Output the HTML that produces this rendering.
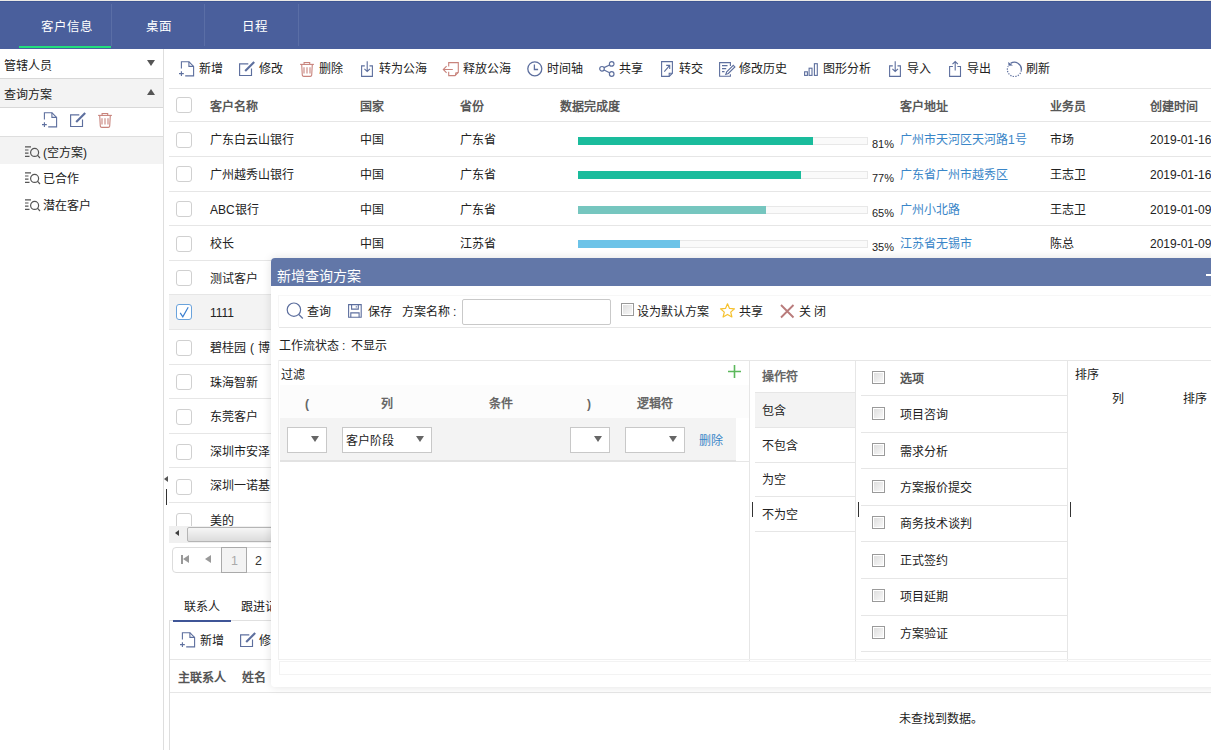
<!DOCTYPE html>
<html lang="zh-CN">
<head>
<meta charset="utf-8">
<style>
html,body{margin:0;padding:0;}
body{width:1211px;height:750px;overflow:hidden;position:relative;background:#fff;font-family:"Liberation Sans",sans-serif;font-size:12px;color:#222;}
.a{position:absolute;}
.t{position:absolute;white-space:nowrap;line-height:16px;height:16px;}
svg{position:absolute;overflow:visible;}
.cb{position:absolute;box-sizing:border-box;width:16px;height:16px;border:1px solid #d0d0d0;border-radius:3px;background:#fff;}
.sq{position:absolute;box-sizing:border-box;width:13px;height:13px;border:1px solid #9a9a9a;background:linear-gradient(135deg,#dcdcdc,#fafafa);box-shadow:inset 0 0 0 1px #fff;}
.sel{position:absolute;box-sizing:border-box;height:26px;border:1px solid #c8c8c8;background:#fff;}
.tri{position:absolute;width:0;height:0;border-left:5px solid transparent;border-right:5px solid transparent;border-top:7px solid #666;}
</style>
</head>
<body>
<div class="a" style="left:0px;top:0px;width:1211px;height:1px;background:#ebe9e6;"></div>
<div class="a" style="left:0px;top:1px;width:1211px;height:48px;background:#4a5f9c;"></div>
<div class="a" style="left:0px;top:1px;width:1211px;height:1px;background:#3e5592;"></div>
<div class="t" style="left:41px;top:18.5px;font-size:12.5px;color:#fff;">客户信息</div>
<div class="t" style="left:146px;top:18.5px;font-size:12.5px;color:#fff;">桌面</div>
<div class="t" style="left:242px;top:18.5px;font-size:12.5px;color:#fff;">日程</div>
<div class="a" style="left:111px;top:4px;width:1px;height:42px;background:#5a6ea6;"></div>
<div class="a" style="left:204px;top:4px;width:1px;height:42px;background:#5a6ea6;"></div>
<div class="a" style="left:298px;top:4px;width:1px;height:42px;background:#5a6ea6;"></div>
<div class="a" style="left:19px;top:46px;width:92px;height:2px;background:#22e07d;"></div>
<div class="a" style="left:163px;top:49px;width:1px;height:701px;background:#dedede;"></div>
<div class="t" style="left:4px;top:57.7px;font-size:12px;color:#222;">管辖人员</div>
<div class="tri" style="left:147px;top:60px;border-left-width:4px;border-right-width:4px;border-top:6px solid #555"></div>
<div class="a" style="left:0px;top:78px;width:163px;height:1px;background:#d8d8d8;"></div>
<div class="a" style="left:0px;top:79px;width:163px;height:28px;background:#f3f3f3;"></div>
<div class="t" style="left:4px;top:86.5px;font-size:12px;color:#222;">查询方案</div>
<div class="tri" style="left:147px;top:89px;border-left-width:4px;border-right-width:4px;border-top:0;border-bottom:6px solid #555"></div>
<div class="a" style="left:0px;top:107px;width:163px;height:1px;background:#d8d8d8;"></div>
<svg style="left:42px;top:112px;" width="16" height="16" viewBox="0 0 16 16"><g fill="none" stroke="#5d6f9e" stroke-width="1.1"><path d="M2.4 7.4V0.8h7.6l4.6 4.6v9.5H6.2"/><path d="M9.9 0.8v4.6h4.7"/><path d="M0 12.6h4.8M2.4 10.2v4.8"/></g></svg>
<svg style="left:70px;top:112px;" width="17" height="16" viewBox="0 0 17 16"><g fill="none" stroke="#5d6f9e" stroke-width="1.15"><path d="M9.3 2.9H0.6v11.6h11.9V7.6"/></g><path d="M6.2 9.9L15.2 0.9" stroke="#5d6f9e" stroke-width="2.1"/></svg>
<svg style="left:98px;top:112px;" width="15" height="16" viewBox="0 0 15 16"><g fill="none" stroke="#c8837c" stroke-width="1.1"><path d="M0.1 3.4h13.8"/><path d="M4.1 3.4V1.5h5.6v1.9"/><path d="M1.7 3.4l0.6 10.8q0.2 1.2 1.4 1.2h6.6q1.2 0 1.4-1.2l0.6-10.8"/><path d="M4 6.2v6.3M7 6.2v6.3M10 6.2v6.3"/></g></svg>
<div class="a" style="left:0px;top:136px;width:163px;height:1px;background:#dedede;"></div>
<div class="a" style="left:0px;top:137px;width:163px;height:27px;background:#f3f3f3;"></div>
<svg style="left:25px;top:145.7px;" width="16" height="12" viewBox="0 0 16 12"><g fill="none" stroke="#555" stroke-width="1.2"><path d="M0 0.8h6M0 4h3.5M0 7.2h3.5M0 10.4h4.5"/><circle cx="9.6" cy="6.4" r="4"/><path d="M12.4 9.2l2.6 2.8"/></g></svg>
<div class="t" style="left:43px;top:144.7px;font-size:12px;color:#222;">(空方案)</div>
<svg style="left:25px;top:172.3px;" width="16" height="12" viewBox="0 0 16 12"><g fill="none" stroke="#555" stroke-width="1.2"><path d="M0 0.8h6M0 4h3.5M0 7.2h3.5M0 10.4h4.5"/><circle cx="9.6" cy="6.4" r="4"/><path d="M12.4 9.2l2.6 2.8"/></g></svg>
<div class="t" style="left:43px;top:171.3px;font-size:12px;color:#222;">已合作</div>
<svg style="left:25px;top:199px;" width="16" height="12" viewBox="0 0 16 12"><g fill="none" stroke="#555" stroke-width="1.2"><path d="M0 0.8h6M0 4h3.5M0 7.2h3.5M0 10.4h4.5"/><circle cx="9.6" cy="6.4" r="4"/><path d="M12.4 9.2l2.6 2.8"/></g></svg>
<div class="t" style="left:43px;top:198px;font-size:12px;color:#222;">潜在客户</div>
<div class="a" style="left:169px;top:88px;width:1042px;height:1px;background:#e6e6e6;"></div>
<svg style="left:179px;top:61px;" width="16" height="16" viewBox="0 0 16 16"><g fill="none" stroke="#5d6f9e" stroke-width="1.1"><path d="M2.4 7.4V0.8h7.6l4.6 4.6v9.5H6.2"/><path d="M9.9 0.8v4.6h4.7"/><path d="M0 12.6h4.8M2.4 10.2v4.8"/></g></svg>
<div class="t" style="left:199px;top:61px;font-size:12px;color:#222;">新增</div>
<svg style="left:239px;top:61px;" width="17" height="16" viewBox="0 0 17 16"><g fill="none" stroke="#5d6f9e" stroke-width="1.15"><path d="M9.3 2.9H0.6v11.6h11.9V7.6"/></g><path d="M6.2 9.9L15.2 0.9" stroke="#5d6f9e" stroke-width="2.1"/></svg>
<div class="t" style="left:259px;top:61px;font-size:12px;color:#222;">修改</div>
<svg style="left:300px;top:61px;" width="15" height="16" viewBox="0 0 15 16"><g fill="none" stroke="#c8837c" stroke-width="1.1"><path d="M0.1 3.4h13.8"/><path d="M4.1 3.4V1.5h5.6v1.9"/><path d="M1.7 3.4l0.6 10.8q0.2 1.2 1.4 1.2h6.6q1.2 0 1.4-1.2l0.6-10.8"/><path d="M4 6.2v6.3M7 6.2v6.3M10 6.2v6.3"/></g></svg>
<div class="t" style="left:319px;top:61px;font-size:12px;color:#222;">删除</div>
<svg style="left:361px;top:61px;" width="13" height="16" viewBox="0 0 13 16"><g fill="none" stroke="#5d6f9e" stroke-width="1.1"><path d="M3.8 4.9H0.6v10.5h10.8V4.9H8.5"/><path d="M6.2 0.2v10.2M3.4 7.8l2.8 2.7 2.8-2.7"/></g></svg>
<div class="t" style="left:379px;top:61px;font-size:12px;color:#222;">转为公海</div>
<svg style="left:443px;top:61px;" width="16" height="16" viewBox="0 0 16 16"><g fill="none" stroke="#c8837c" stroke-width="1.1"><path d="M5.7 5.6V1.6h9.6v9.7l-3.3 3.3H5.7v-3.8"/><path d="M0.3 8.5h9.5M3.6 5.2L0.3 8.5l3.3 3.3"/><path d="M12.5 14.4l0.3-2.5 2.4-0.3"/></g></svg>
<div class="t" style="left:463px;top:61px;font-size:12px;color:#222;">释放公海</div>
<svg style="left:527px;top:61px;" width="16" height="16" viewBox="0 0 16 16"><g fill="none" stroke="#5d6f9e" stroke-width="1.3"><circle cx="7.8" cy="7.8" r="7"/><path d="M7.4 3.4v5.1h3.7"/></g></svg>
<div class="t" style="left:547px;top:61px;font-size:12px;color:#222;">时间轴</div>
<svg style="left:599px;top:61px;" width="16" height="16" viewBox="0 0 16 16"><g fill="none" stroke="#5d6f9e" stroke-width="1.2"><circle cx="3" cy="7.8" r="2.3"/><circle cx="12.7" cy="2.9" r="2.3"/><circle cx="12.7" cy="13" r="2.3"/><path d="M5 6.6l5.6-2.6M5 9l5.6 2.8"/></g></svg>
<div class="t" style="left:619px;top:61px;font-size:12px;color:#222;">共享</div>
<svg style="left:661px;top:61px;" width="13" height="16" viewBox="0 0 13 16"><g fill="none" stroke="#5d6f9e" stroke-width="1.1"><path d="M0.6 0.6h10.8v11.6l-3.2 3.2H0.6z"/><path d="M8.2 15.4v-3.2h3.2"/><path d="M3.3 10.6L8.5 4.6M5.2 4.4h3.5v3.5"/></g></svg>
<div class="t" style="left:679px;top:61px;font-size:12px;color:#222;">转交</div>
<svg style="left:719px;top:62px;" width="17" height="15" viewBox="0 0 17 15"><g fill="none" stroke="#5d6f9e" stroke-width="1.1"><path d="M11.4 4V0.6H0.6v13.6h10.8v-2"/><path d="M3 3.6h5.5M3 6.6h4.2M3 9.6h2.5"/><path d="M14.3 3.3l1.6 1.6-6.6 6.6-2.5 0.9 0.9-2.5z"/></g></svg>
<div class="t" style="left:739px;top:61px;font-size:12px;color:#222;">修改历史</div>
<svg style="left:804px;top:61px;" width="15" height="16" viewBox="0 0 15 16"><g fill="none" stroke="#5d6f9e" stroke-width="1.1"><rect x="0.6" y="10.8" width="2.8" height="3.6"/><rect x="5.1" y="7.2" width="2.9" height="7.2"/><rect x="10.4" y="2.7" width="2.9" height="11.7"/></g></svg>
<div class="t" style="left:823px;top:61px;font-size:12px;color:#222;">图形分析</div>
<svg style="left:889px;top:61px;" width="13" height="16" viewBox="0 0 13 16"><g fill="none" stroke="#5d6f9e" stroke-width="1.1"><path d="M3.8 4.9H0.6v10.5h10.8V4.9H8.5"/><path d="M6.2 0.2v10.2M3.4 7.8l2.8 2.7 2.8-2.7"/></g></svg>
<div class="t" style="left:907px;top:61px;font-size:12px;color:#222;">导入</div>
<svg style="left:949px;top:61px;" width="13" height="16" viewBox="0 0 13 16"><g fill="none" stroke="#5d6f9e" stroke-width="1.1"><path d="M3.9 5.5H0.6v9.9h10.9V5.5H8.4"/><path d="M6.2 9.6V0.6M3.5 3.2l2.7-2.7 2.7 2.7"/></g></svg>
<div class="t" style="left:967px;top:61px;font-size:12px;color:#222;">导出</div>
<svg style="left:1007px;top:61px;" width="16" height="16" viewBox="0 0 16 16"><g fill="none" stroke="#5d6f9e" stroke-width="1.3"><path d="M3.6 2.4A7 7 0 0 1 14.3 9.4"/><path d="M14.3 9.4A7 7 0 1 1 1.2 5.2" stroke-dasharray="1.3 1.3" stroke-width="1.2"/></g><path d="M1.2 0.9L6 4.5L1.5 4.7z" fill="#5d6f9e"/></svg>
<div class="t" style="left:1026px;top:61px;font-size:12px;color:#222;">刷新</div>
<div class="cb" style="left:176px;top:97px"></div>
<div class="t" style="left:210px;top:98.5px;font-size:12px;color:#585858;font-weight:bold;">客户名称</div>
<div class="t" style="left:360px;top:98.5px;font-size:12px;color:#585858;font-weight:bold;">国家</div>
<div class="t" style="left:460px;top:98.5px;font-size:12px;color:#585858;font-weight:bold;">省份</div>
<div class="t" style="left:560px;top:98.5px;font-size:12px;color:#585858;font-weight:bold;">数据完成度</div>
<div class="t" style="left:900px;top:98.5px;font-size:12px;color:#585858;font-weight:bold;">客户地址</div>
<div class="t" style="left:1050px;top:98.5px;font-size:12px;color:#585858;font-weight:bold;">业务员</div>
<div class="t" style="left:1150px;top:98.5px;font-size:12px;color:#585858;font-weight:bold;">创建时间</div>
<div class="a" style="left:169px;top:121px;width:1042px;height:1px;background:#e6e6e6;"></div>
<div class="cb" style="left:176px;top:132px"></div>
<div class="t" style="left:210px;top:132.2px;font-size:12px;color:#222;">广东白云山银行</div>
<div class="t" style="left:360px;top:132.2px;font-size:12px;color:#222;">中国</div>
<div class="t" style="left:460px;top:132.2px;font-size:12px;color:#222;">广东省</div>
<div class="a" style="left:578px;top:137px;width:290px;height:8px;background:#fafafa;box-sizing:border-box;border:1px solid #e8e8e8"></div>
<div class="a" style="left:578px;top:137px;width:235px;height:8px;background:#1abc9c;"></div>
<div class="t" style="left:872px;top:136.2px;font-size:11px;color:#222;">81%</div>
<div class="t" style="left:900px;top:132.2px;font-size:12px;color:#3a86c8;">广州市天河区天河路1号</div>
<div class="t" style="left:1050px;top:132.2px;font-size:12px;color:#222;">市场</div>
<div class="t" style="left:1150px;top:132.2px;font-size:12px;color:#222;">2019-01-16</div>
<div class="a" style="left:169px;top:156px;width:1042px;height:1px;background:#e6e6e6;"></div>
<div class="cb" style="left:176px;top:166px"></div>
<div class="t" style="left:210px;top:167.2px;font-size:12px;color:#222;">广州越秀山银行</div>
<div class="t" style="left:360px;top:167.2px;font-size:12px;color:#222;">中国</div>
<div class="t" style="left:460px;top:167.2px;font-size:12px;color:#222;">广东省</div>
<div class="a" style="left:578px;top:171px;width:290px;height:8px;background:#fafafa;box-sizing:border-box;border:1px solid #e8e8e8"></div>
<div class="a" style="left:578px;top:171px;width:223px;height:8px;background:#1abc9c;"></div>
<div class="t" style="left:872px;top:170.4px;font-size:11px;color:#222;">77%</div>
<div class="t" style="left:900px;top:167.2px;font-size:12px;color:#3a86c8;">广东省广州市越秀区</div>
<div class="t" style="left:1050px;top:167.2px;font-size:12px;color:#222;">王志卫</div>
<div class="t" style="left:1150px;top:167.2px;font-size:12px;color:#222;">2019-01-16</div>
<div class="a" style="left:169px;top:191px;width:1042px;height:1px;background:#e6e6e6;"></div>
<div class="cb" style="left:176px;top:201px"></div>
<div class="t" style="left:210px;top:202.2px;font-size:12px;color:#222;">ABC银行</div>
<div class="t" style="left:360px;top:202.2px;font-size:12px;color:#222;">中国</div>
<div class="t" style="left:460px;top:202.2px;font-size:12px;color:#222;">广东省</div>
<div class="a" style="left:578px;top:206px;width:290px;height:8px;background:#fafafa;box-sizing:border-box;border:1px solid #e8e8e8"></div>
<div class="a" style="left:578px;top:206px;width:188px;height:8px;background:#76c6bf;"></div>
<div class="t" style="left:872px;top:205px;font-size:11px;color:#222;">65%</div>
<div class="t" style="left:900px;top:202.2px;font-size:12px;color:#3a86c8;">广州小北路</div>
<div class="t" style="left:1050px;top:202.2px;font-size:12px;color:#222;">王志卫</div>
<div class="t" style="left:1150px;top:202.2px;font-size:12px;color:#222;">2019-01-09</div>
<div class="a" style="left:169px;top:225px;width:1042px;height:1px;background:#e6e6e6;"></div>
<div class="cb" style="left:176px;top:236px"></div>
<div class="t" style="left:210px;top:236.2px;font-size:12px;color:#222;">校长</div>
<div class="t" style="left:360px;top:236.2px;font-size:12px;color:#222;">中国</div>
<div class="t" style="left:460px;top:236.2px;font-size:12px;color:#222;">江苏省</div>
<div class="a" style="left:578px;top:240px;width:290px;height:8px;background:#fafafa;box-sizing:border-box;border:1px solid #e8e8e8"></div>
<div class="a" style="left:578px;top:240px;width:102px;height:8px;background:#6cc3e8;"></div>
<div class="t" style="left:872px;top:238.8px;font-size:11px;color:#222;">35%</div>
<div class="t" style="left:900px;top:236.2px;font-size:12px;color:#3a86c8;">江苏省无锡市</div>
<div class="t" style="left:1050px;top:236.2px;font-size:12px;color:#222;">陈总</div>
<div class="t" style="left:1150px;top:236.2px;font-size:12px;color:#222;">2019-01-09</div>
<div class="a" style="left:169px;top:260px;width:1042px;height:1px;background:#e6e6e6;"></div>
<div class="cb" style="left:176px;top:270px"></div>
<div class="t" style="left:210px;top:271.2px;font-size:12px;color:#222;">测试客户</div>
<div class="a" style="left:169px;top:294px;width:1042px;height:1px;background:#e6e6e6;"></div>
<div class="a" style="left:169px;top:295px;width:1042px;height:34px;background:#f3f3f3;"></div>
<div class="cb" style="left:176px;top:304px;border-color:#6aa3dc"></div>
<svg style="left:178px;top:306px;" width="12" height="12" viewBox="0 0 12 12"><path d="M2.2 6.8l2.6 4L10.2 1.2" fill="none" stroke="#3b7fd0" stroke-width="1.2"/></svg>
<div class="t" style="left:210px;top:305.2px;font-size:12px;color:#222;">1111</div>
<div class="a" style="left:169px;top:329px;width:1042px;height:1px;background:#e6e6e6;"></div>
<div class="cb" style="left:176px;top:340px"></div>
<div class="t" style="left:210px;top:340.2px;font-size:12px;color:#222;">碧桂园<span style="display:inline-block;width:12px;text-align:center">(</span>博</div>
<div class="a" style="left:169px;top:364px;width:1042px;height:1px;background:#e6e6e6;"></div>
<div class="cb" style="left:176px;top:374px"></div>
<div class="t" style="left:210px;top:375.2px;font-size:12px;color:#222;">珠海智新</div>
<div class="a" style="left:169px;top:398px;width:1042px;height:1px;background:#e6e6e6;"></div>
<div class="cb" style="left:176px;top:409px"></div>
<div class="t" style="left:210px;top:409.2px;font-size:12px;color:#222;">东莞客户</div>
<div class="a" style="left:169px;top:433px;width:1042px;height:1px;background:#e6e6e6;"></div>
<div class="cb" style="left:176px;top:444px"></div>
<div class="t" style="left:210px;top:444.2px;font-size:12px;color:#222;">深圳市安泽</div>
<div class="a" style="left:169px;top:467px;width:1042px;height:1px;background:#e6e6e6;"></div>
<div class="cb" style="left:176px;top:479px"></div>
<div class="t" style="left:210px;top:478.2px;font-size:12px;color:#222;">深圳一诺基</div>
<div class="a" style="left:169px;top:502px;width:1042px;height:1px;background:#e6e6e6;"></div>
<div class="cb" style="left:176px;top:513px"></div>
<div class="t" style="left:210px;top:513.2px;font-size:12px;color:#222;">美的</div>
<div class="a" style="left:164px;top:476px;width:0;height:0;border-top:3px solid transparent;border-bottom:3px solid transparent;border-right:4px solid #555"></div>
<div class="a" style="left:166px;top:489px;width:1px;height:16px;background:#333;"></div>
<div class="a" style="left:169px;top:526px;width:1042px;height:17px;background:#f0f0f0;"></div>
<div class="a" style="left:175px;top:530px;width:0;height:0;border-top:3.5px solid transparent;border-bottom:3.5px solid transparent;border-right:4px solid #404040"></div>
<div class="a" style="left:187px;top:527px;width:1000px;height:15px;background:linear-gradient(#f6f6f6,#dcdcdc);box-sizing:border-box;border:1px solid #b5b5b5;border-radius:2px"></div>
<div class="a" style="left:172px;top:547px;width:200px;height:26px;background:#fff;box-sizing:border-box;border:1px solid #dcdcdc;border-radius:4px"></div>
<div class="a" style="left:221px;top:547px;width:26px;height:26px;background:#f3f3f3;box-sizing:border-box;border:1px solid #aaa"></div>
<div class="a" style="left:181px;top:555px;width:1.5px;height:9px;background:#999;"></div>
<div class="a" style="left:183px;top:555px;width:0;height:0;border-top:4.5px solid transparent;border-bottom:4.5px solid transparent;border-right:6px solid #999"></div>
<div class="a" style="left:205px;top:555px;width:0;height:0;border-top:4.5px solid transparent;border-bottom:4.5px solid transparent;border-right:6px solid #999"></div>
<div class="t" style="left:231px;top:553px;font-size:12.5px;color:#aaa;">1</div>
<div class="t" style="left:255px;top:553px;font-size:12.5px;color:#333;">2</div>
<div class="a" style="left:169px;top:620px;width:1042px;height:1px;background:#e0e0e0;"></div>
<div class="t" style="left:184px;top:598.5px;font-size:12px;color:#222;">联系人</div>
<div class="t" style="left:241px;top:598.5px;font-size:12px;color:#222;">跟进记录</div>
<div class="a" style="left:173px;top:620px;width:58px;height:2px;background:#3f5597;"></div>
<div class="a" style="left:169px;top:621px;width:1px;height:129px;background:#dedede;"></div>
<svg style="left:180px;top:632px;" width="16" height="16" viewBox="0 0 16 16"><g fill="none" stroke="#5d6f9e" stroke-width="1.1"><path d="M2.4 7.4V0.8h7.6l4.6 4.6v9.5H6.2"/><path d="M9.9 0.8v4.6h4.7"/><path d="M0 12.6h4.8M2.4 10.2v4.8"/></g></svg>
<div class="t" style="left:200px;top:632.5px;font-size:12px;color:#222;">新增</div>
<svg style="left:240px;top:632px;" width="17" height="16" viewBox="0 0 17 16"><g fill="none" stroke="#5d6f9e" stroke-width="1.15"><path d="M9.3 2.9H0.6v11.6h11.9V7.6"/></g><path d="M6.2 9.9L15.2 0.9" stroke="#5d6f9e" stroke-width="2.1"/></svg>
<div class="t" style="left:259px;top:632.5px;font-size:12px;color:#222;">修改</div>
<div class="a" style="left:170px;top:659px;width:1041px;height:1px;background:#e6e6e6;"></div>
<div class="t" style="left:178px;top:670px;font-size:12px;color:#555;font-weight:bold;">主联系人</div>
<div class="t" style="left:242px;top:670px;font-size:12px;color:#555;font-weight:bold;">姓名</div>
<div class="a" style="left:170px;top:692px;width:1041px;height:1px;background:#e6e6e6;"></div>
<div class="t" style="left:899px;top:711px;font-size:12px;color:#222;">未查找到数据。</div>
<div class="a" style="left:271px;top:258px;width:960px;height:429px;background:#fff;border-radius:4px;box-shadow:0 0 10px rgba(0,0,0,0.12)"></div>
<div class="a" style="left:271px;top:258px;width:960px;height:28px;background:#6277a8;border-radius:4px 4px 0 0"></div>
<div class="t" style="left:277px;top:268px;font-size:14px;color:#fff;">新增查询方案</div>
<div class="a" style="left:1206px;top:274px;width:6px;height:2px;background:#fff;"></div>
<div class="a" style="left:278px;top:295px;width:940px;height:1px;background:#f7f7f7;"></div>
<div class="a" style="left:278px;top:295px;width:1px;height:32px;background:#f6f6f6;"></div>
<svg style="left:286px;top:302px;" width="18" height="18" viewBox="0 0 18 18"><g fill="none" stroke="#5d6f9e" stroke-width="1.2"><circle cx="7.9" cy="7.7" r="6.7"/><path d="M12.8 12.5l4 4"/></g></svg>
<div class="t" style="left:307px;top:304px;font-size:12px;color:#222;">查询</div>
<svg style="left:348px;top:304px;" width="15" height="15" viewBox="0 0 15 15"><g fill="none" stroke="#5d6f9e" stroke-width="1.1"><path d="M0.6 0.6h12.6v12.6H0.6z"/><path d="M3.6 0.6v4.5h6.7V0.6M2.8 13.2V8.9h8.3v4.3"/><path d="M8.3 2.2v1.4"/></g></svg>
<div class="t" style="left:368px;top:304px;font-size:12px;color:#222;">保存</div>
<div class="t" style="left:402px;top:304px;font-size:12px;color:#222;">方案名称<span style="margin:0 4px 0 3px">:</span></div>
<div class="a" style="left:462px;top:299px;width:149px;height:26px;background:#fff;box-sizing:border-box;border:1px solid #c9c9c9;border-radius:2px"></div>
<div class="sq" style="left:621px;top:303px"></div>
<div class="t" style="left:637px;top:304px;font-size:12px;color:#222;">设为默认方案</div>
<svg style="left:720px;top:303px;" width="16" height="16" viewBox="0 0 16 16"><path d="M7.5 0.8l2 4.6 5 .4-3.8 3.3 1.2 4.9-4.4-2.6-4.4 2.6 1.2-4.9L.5 5.8l5-.4z" fill="none" stroke="#f6c12e" stroke-width="1.2" stroke-linejoin="round"/></svg>
<div class="t" style="left:739px;top:304px;font-size:12px;color:#222;">共享</div>
<svg style="left:780px;top:304px;" width="15" height="15" viewBox="0 0 15 15"><path d="M1 1l12.5 12.5M13.5 1L1 13.5" stroke="#b97b7b" stroke-width="1.9"/></svg>
<div class="t" style="left:799px;top:304px;font-size:12px;color:#222;">关 闭</div>
<div class="a" style="left:279px;top:327px;width:932px;height:1px;background:#e6e6e6;"></div>
<div class="t" style="left:279px;top:337.6px;font-size:12px;color:#222;">工作流状态<span style="margin:0 6px 0 3px">:</span>不显示</div>
<div class="a" style="left:279px;top:360px;width:932px;height:1px;background:#e6e6e6;"></div>
<div class="a" style="left:278px;top:360px;width:1px;height:300px;background:#f0f0f0;"></div>
<div class="t" style="left:281px;top:367px;font-size:12px;color:#222;">过滤</div>
<svg style="left:728px;top:365px;" width="14" height="14" viewBox="0 0 14 14"><path d="M6.5 0v13M0 6.5h13" stroke="#5cb85c" stroke-width="1.6"/></svg>
<div class="a" style="left:280px;top:385px;width:469px;height:33px;background:#fcfcfc;"></div>
<div class="t" style="left:305px;top:396px;font-size:12px;color:#666;font-weight:bold;">(</div>
<div class="t" style="left:381px;top:396px;font-size:12px;color:#666;font-weight:bold;">列</div>
<div class="t" style="left:489px;top:396px;font-size:12px;color:#666;font-weight:bold;">条件</div>
<div class="t" style="left:587px;top:396px;font-size:12px;color:#666;font-weight:bold;">)</div>
<div class="t" style="left:637px;top:396px;font-size:12px;color:#666;font-weight:bold;">逻辑符</div>
<div class="a" style="left:280px;top:418px;width:456px;height:42px;background:#f3f3f3;"></div>
<div class="a" style="left:280px;top:460px;width:456px;height:2px;background:#e2e2e2;"></div>
<div class="a" style="left:736px;top:461px;width:13px;height:1px;background:#e6e6e6;"></div>
<div class="sel" style="left:287px;top:427px;width:40px"></div>
<div class="tri" style="left:311px;top:436px;border-left-width:4px;border-right-width:4px;border-top:6px solid #666"></div>
<div class="sel" style="left:342px;top:427px;width:90px"></div>
<div class="tri" style="left:416px;top:436px;border-left-width:4px;border-right-width:4px;border-top:6px solid #666"></div>
<div class="sel" style="left:570px;top:427px;width:40px"></div>
<div class="tri" style="left:594px;top:436px;border-left-width:4px;border-right-width:4px;border-top:6px solid #666"></div>
<div class="sel" style="left:625px;top:427px;width:60px"></div>
<div class="tri" style="left:669px;top:436px;border-left-width:4px;border-right-width:4px;border-top:6px solid #666"></div>
<div class="t" style="left:346px;top:432.5px;font-size:12px;color:#222;">客户阶段</div>
<div class="t" style="left:699px;top:432.5px;font-size:12px;color:#3a86c8;">删除</div>
<div class="a" style="left:749px;top:360px;width:1px;height:301px;background:#e6e6e6;"></div>
<div class="t" style="left:762px;top:369px;font-size:12px;color:#666;font-weight:bold;">操作符</div>
<div class="a" style="left:755px;top:392px;width:100px;height:35px;background:#f3f3f3;"></div>
<div class="a" style="left:755px;top:392px;width:100px;height:1px;background:#e6e6e6;"></div>
<div class="a" style="left:755px;top:427px;width:100px;height:1px;background:#e6e6e6;"></div>
<div class="a" style="left:755px;top:462px;width:100px;height:1px;background:#e6e6e6;"></div>
<div class="a" style="left:755px;top:496px;width:100px;height:1px;background:#e6e6e6;"></div>
<div class="a" style="left:755px;top:531px;width:100px;height:1px;background:#e6e6e6;"></div>
<div class="t" style="left:762px;top:403px;font-size:12px;color:#222;">包含</div>
<div class="t" style="left:762px;top:437.5px;font-size:12px;color:#222;">不包含</div>
<div class="t" style="left:762px;top:472px;font-size:12px;color:#222;">为空</div>
<div class="t" style="left:762px;top:507px;font-size:12px;color:#222;">不为空</div>
<div class="a" style="left:855px;top:360px;width:1px;height:301px;background:#e6e6e6;"></div>
<div class="sq" style="left:872px;top:371px"></div>
<div class="t" style="left:900px;top:371px;font-size:12px;color:#555;font-weight:bold;">选项</div>
<div class="sq" style="left:872px;top:407px"></div>
<div class="t" style="left:900px;top:407px;font-size:12px;color:#222;">项目咨询</div>
<div class="sq" style="left:872px;top:443px"></div>
<div class="t" style="left:900px;top:443.5px;font-size:12px;color:#222;">需求分析</div>
<div class="sq" style="left:872px;top:480px"></div>
<div class="t" style="left:900px;top:480px;font-size:12px;color:#222;">方案报价提交</div>
<div class="sq" style="left:872px;top:516px"></div>
<div class="t" style="left:900px;top:516px;font-size:12px;color:#222;">商务技术谈判</div>
<div class="sq" style="left:872px;top:554px"></div>
<div class="t" style="left:900px;top:553px;font-size:12px;color:#222;">正式签约</div>
<div class="sq" style="left:872px;top:589px"></div>
<div class="t" style="left:900px;top:589px;font-size:12px;color:#222;">项目延期</div>
<div class="sq" style="left:872px;top:626px"></div>
<div class="t" style="left:900px;top:626px;font-size:12px;color:#222;">方案验证</div>
<div class="a" style="left:861px;top:395px;width:206px;height:1px;background:#e6e6e6;"></div>
<div class="a" style="left:861px;top:432px;width:206px;height:1px;background:#e6e6e6;"></div>
<div class="a" style="left:861px;top:468px;width:206px;height:1px;background:#e6e6e6;"></div>
<div class="a" style="left:861px;top:505px;width:206px;height:1px;background:#e6e6e6;"></div>
<div class="a" style="left:861px;top:541px;width:206px;height:1px;background:#e6e6e6;"></div>
<div class="a" style="left:861px;top:578px;width:206px;height:1px;background:#e6e6e6;"></div>
<div class="a" style="left:861px;top:615px;width:206px;height:1px;background:#e6e6e6;"></div>
<div class="a" style="left:861px;top:651px;width:206px;height:1px;background:#e6e6e6;"></div>
<div class="a" style="left:1067px;top:360px;width:1px;height:301px;background:#e6e6e6;"></div>
<div class="t" style="left:1075px;top:366.5px;font-size:12px;color:#222;">排序</div>
<div class="t" style="left:1112px;top:390.5px;font-size:12px;color:#222;">列</div>
<div class="t" style="left:1183px;top:390.5px;font-size:12px;color:#222;">排序</div>
<div class="a" style="left:752px;top:502px;width:1px;height:15px;background:#333;"></div>
<div class="a" style="left:858px;top:502px;width:1px;height:15px;background:#333;"></div>
<div class="a" style="left:1070px;top:502px;width:1px;height:15px;background:#333;"></div>
<div class="a" style="left:279px;top:659px;width:932px;height:1px;background:#f0f0f0;"></div>
<div class="a" style="left:279px;top:661px;width:960px;height:14px;background:#fff;box-sizing:border-box;border:1px solid #f3f3f3"></div>
</body></html>
